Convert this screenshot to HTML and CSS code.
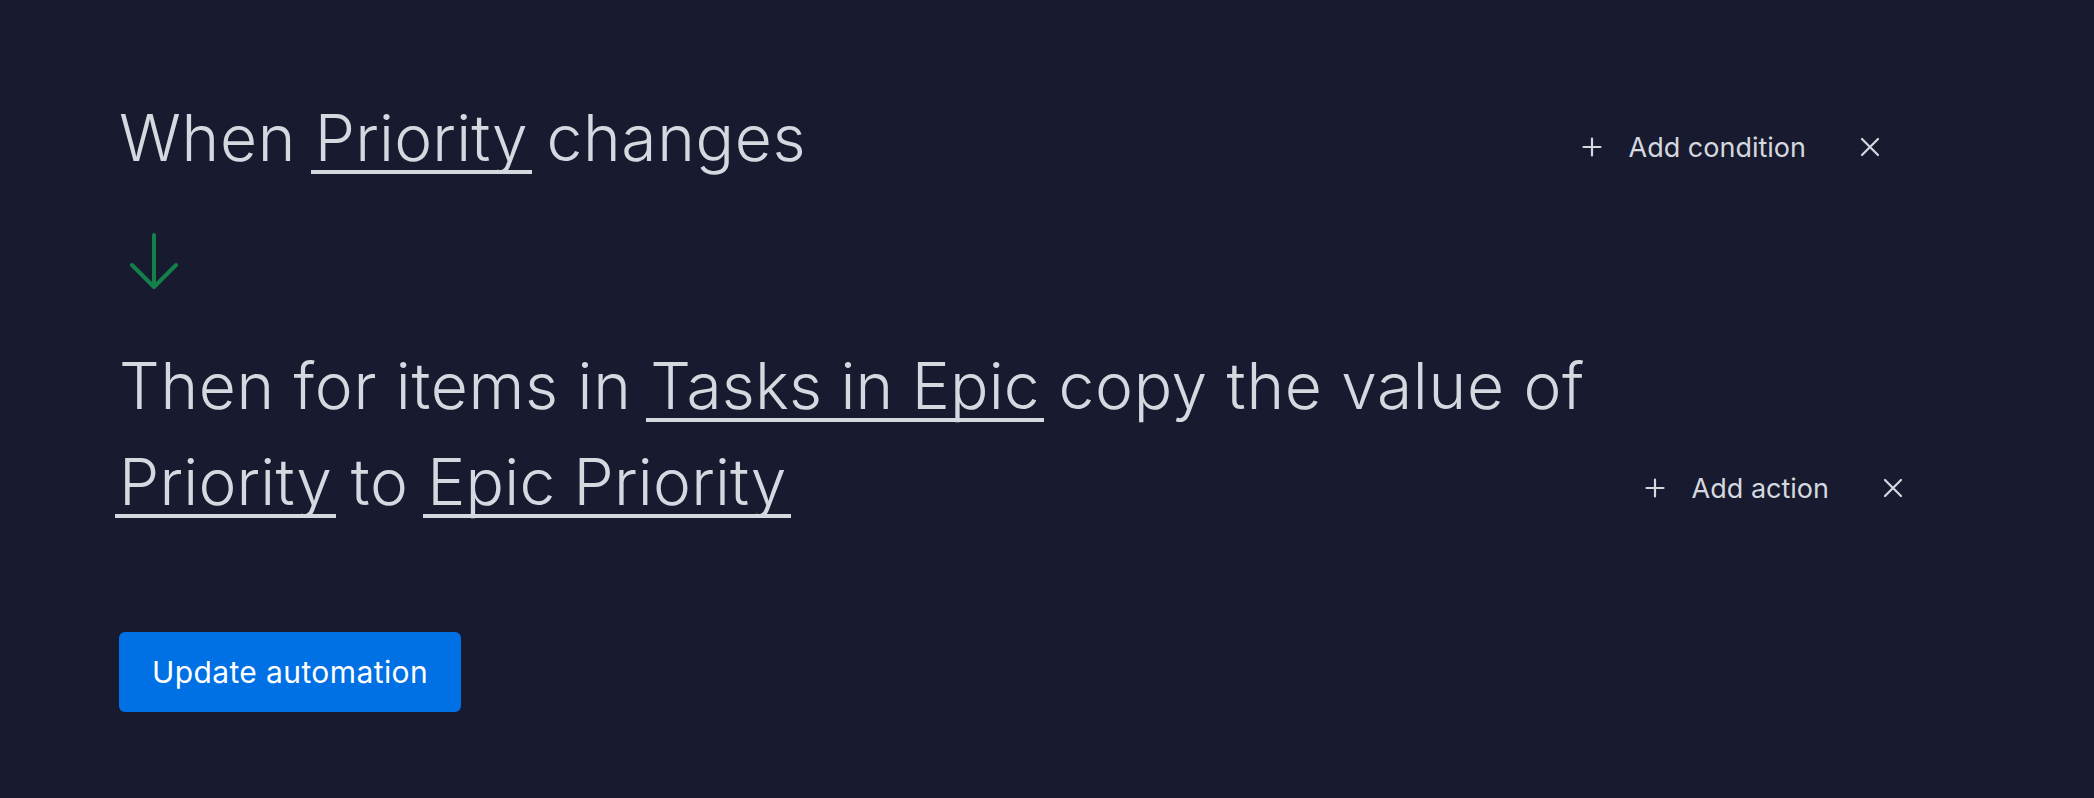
FILE: index.html
```html
<!DOCTYPE html>
<html lang="en">
<head>
<meta charset="utf-8">
<title>Automation</title>
<link rel="stylesheet" href="styles.css">
</head>
<body>
<main class="editor">
  <section class="row row-condition">
    <h1 class="sentence">When <span class="field">Priority</span> changes</h1>
    <div class="actions actions-condition">
      <button class="link-btn" type="button">
        <svg class="ico" viewBox="0 0 20 20" aria-hidden="true"><path d="M10 1.5v17M1.5 10h17"/></svg>
        <span>Add condition</span>
      </button>
      <button class="close-btn" type="button" aria-label="Remove">
        <svg class="ico" viewBox="0 0 20 20" aria-hidden="true"><path d="M2 2l16 16M18 2L2 18"/></svg>
      </button>
    </div>
  </section>

  <div class="arrow">
    <svg viewBox="0 0 52 60" aria-hidden="true"><path d="M26 3v52M4 33l22 22 22-22"/></svg>
  </div>

  <section class="row row-action">
    <h2 class="sentence">Then for items in <span class="field">Tasks in Epic</span> copy the value of<br><span class="field">Priority</span> to <span class="field">Epic Priority</span></h2>
    <div class="actions actions-action">
      <button class="link-btn" type="button">
        <svg class="ico" viewBox="0 0 20 20" aria-hidden="true"><path d="M10 1.5v17M1.5 10h17"/></svg>
        <span>Add action</span>
      </button>
      <button class="close-btn" type="button" aria-label="Remove">
        <svg class="ico" viewBox="0 0 20 20" aria-hidden="true"><path d="M2 2l16 16M18 2L2 18"/></svg>
      </button>
    </div>
  </section>

  <div class="footer">
    <button class="primary" type="button">Update automation</button>
  </div>
</main>
</body>
</html>
```

FILE: styles.css
```css
html, body {
  margin: 0;
  padding: 0;
  background: #181b30;
}
body {
  width: 2094px;
  height: 798px;
  overflow: hidden;
  font-family: "Inter", "Noto Sans", sans-serif;
  color: #d5d8df;
}
.editor {
  padding: 90px 0 0 119px;
  width: 1800px;
}
.row {
  display: flex;
  align-items: flex-end;
  justify-content: space-between;
}
.sentence {
  margin: 0;
  font-family: "Inter", "Noto Sans", sans-serif;
  font-weight: 300;
  font-size: 64px;
  line-height: 96px;
  color: #d5d8df;
  letter-spacing: 0.7px;
}
.field {
  display: inline-block;
  line-height: 64px;
  border-bottom: 4px solid #d5d8df;
  padding: 0 4px;
  margin: 0 -4px;
  letter-spacing: 0.2px;
}
.actions {
  display: flex;
  align-items: center;
  gap: 54px;
  height: 40px;
}
.actions-condition {
  margin-right: 39px;
  margin-bottom: 19px;
}
.actions-action {
  margin-right: 16px;
  margin-bottom: 22px;
}
.link-btn, .close-btn {
  background: none;
  border: 0;
  padding: 0;
  color: #d5d8df;
  display: flex;
  align-items: center;
  font-family: "Inter", "Noto Sans", sans-serif;
  font-size: 27px;
  cursor: pointer;
}
.link-btn {
  gap: 27px;
}
.ico {
  width: 20px;
  height: 20px;
  fill: none;
  stroke: #d5d8df;
  stroke-width: 2.2;
  stroke-linecap: round;
}
.arrow {
  height: 152px;
  display: flex;
  align-items: center;
  padding-left: 9px;
}
.arrow svg {
  width: 52px;
  height: 60px;
  fill: none;
  stroke: #13804a;
  stroke-width: 4;
  stroke-linecap: round;
  stroke-linejoin: round;
}
.footer {
  padding-top: 102px;
}
.primary {
  width: 342px;
  height: 80px;
  border: 0;
  border-radius: 6px;
  background: #0070e5;
  color: #ffffff;
  font-family: "Inter", "Noto Sans", sans-serif;
  font-size: 30px;
  font-weight: 400;
  letter-spacing: 0.4px;
  padding: 0;
  cursor: pointer;
}
```
